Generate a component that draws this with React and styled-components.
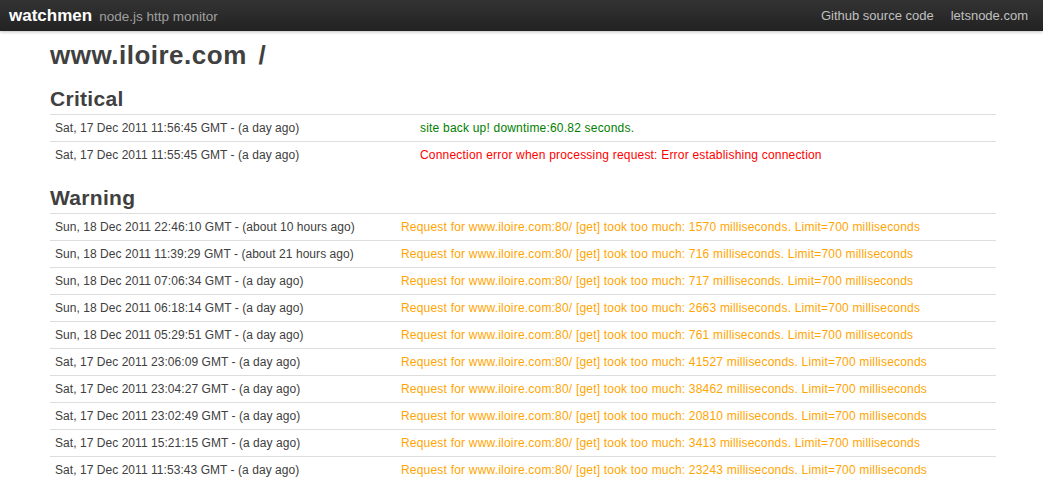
import styled, { createGlobalStyle } from "styled-components";

const GlobalStyle = createGlobalStyle`
  body {
    margin: 0;
    background: #fff;
    font-family: "Liberation Sans", Arial, sans-serif;
    color: #404040;
  }
  * {
    box-sizing: border-box;
  }
`;

const critical = [
  {
    date: "Sat, 17 Dec 2011 11:56:45 GMT - (a day ago)",
    msg: "site back up! downtime:60.82 seconds.",
    level: "ok",
  },
  {
    date: "Sat, 17 Dec 2011 11:55:45 GMT - (a day ago)",
    msg: "Connection error when processing request: Error establishing connection",
    level: "error",
  },
];

const req = "Request for www.iloire.com:80/ [get] took too much: ";
const warnings = [
  ["Sun, 18 Dec 2011 22:46:10 GMT - (about 10 hours ago)", 1570],
  ["Sun, 18 Dec 2011 11:39:29 GMT - (about 21 hours ago)", 716],
  ["Sun, 18 Dec 2011 07:06:34 GMT - (a day ago)", 717],
  ["Sun, 18 Dec 2011 06:18:14 GMT - (a day ago)", 2663],
  ["Sun, 18 Dec 2011 05:29:51 GMT - (a day ago)", 761],
  ["Sat, 17 Dec 2011 23:06:09 GMT - (a day ago)", 41527],
  ["Sat, 17 Dec 2011 23:04:27 GMT - (a day ago)", 38462],
  ["Sat, 17 Dec 2011 23:02:49 GMT - (a day ago)", 20810],
  ["Sat, 17 Dec 2011 15:21:15 GMT - (a day ago)", 3413],
  ["Sat, 17 Dec 2011 11:53:43 GMT - (a day ago)", 23243],
].map(([date, ms]) => ({
  date,
  msg: `${req}${ms} milliseconds. Limit=700 milliseconds`,
  level: "warn",
}));

const colors = {
  ok: "#008000",
  error: "#ff0000",
  warn: "#ffa500",
};

const EventTable = ({ rows, dateWidth }) => (
  <Table>
    <tbody>
      {rows.map((r, i) => (
        <Row key={i}>
          <DateCell width={dateWidth}>{r.date}</DateCell>
          <MsgCell level={r.level}>{r.msg}</MsgCell>
        </Row>
      ))}
    </tbody>
  </Table>
);

const App = () => {
  return (
    <>
      <GlobalStyle />
      <Topbar>
        <Brand>
          <b>watchmen</b>
          <span>node.js http monitor</span>
        </Brand>
        <Nav>
          <a>Github source code</a>
          <a>letsnode.com</a>
        </Nav>
      </Topbar>
      <Container>
        <Title>www.iloire.com /</Title>
        <Section>Critical</Section>
        <EventTable rows={critical} dateWidth={370} />
        <Section>Warning</Section>
        <EventTable rows={warnings} dateWidth={351} />
      </Container>
    </>
  );
};

export default App;

const Topbar = styled.div`
  height: 31px;
  background: linear-gradient(#333333, #222222);
  box-shadow: 0 1px 3px rgba(0, 0, 0, 0.25);
  display: flex;
  align-items: center;
  justify-content: space-between;
  padding: 0 15px 0 9px;
`;

const Brand = styled.div`
  display: flex;
  align-items: baseline;
  gap: 7px;
  b {
    color: #fff;
    font-size: 17px;
    font-weight: 700;
  }
  span {
    color: #a0a0a0;
    font-size: 13.5px;
  }
`;

const Nav = styled.div`
  display: flex;
  gap: 17px;
  a {
    color: #c0c0c0;
    font-size: 13px;
    cursor: pointer;
  }
`;

const Container = styled.div`
  padding: 0 47px 0 50px;
`;

const Title = styled.h1`
  margin: 9px 0 0;
  font-size: 26px;
  line-height: 30px;
  letter-spacing: 0.5px;
  word-spacing: 4px;
  font-weight: 700;
  color: #404040;
`;

const Section = styled.h2`
  margin: 17px 0 3px;
  font-size: 21px;
  line-height: 24px;
  letter-spacing: 0.3px;
  font-weight: 700;
  color: #404040;
`;

const Table = styled.table`
  width: 100%;
  border-collapse: collapse;
  margin-bottom: 18px;
`;

const Row = styled.tr`
  border-top: 1px solid #dddddd;
`;

const DateCell = styled.td`
  width: ${p => p.width}px;
  padding: 4px 5px;
  font-size: 12px;
  line-height: 18px;
  letter-spacing: 0.05px;
  color: #404040;
  white-space: nowrap;
`;

const MsgCell = styled.td`
  padding: 4px 0;
  font-size: 12px;
  line-height: 18px;
  letter-spacing: 0.2px;
  color: ${p => colors[p.level]};
  white-space: nowrap;
`;
